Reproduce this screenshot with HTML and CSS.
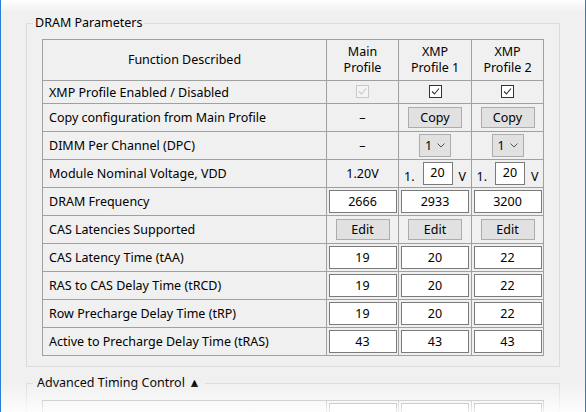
FILE: index.html
```html
<!DOCTYPE html>
<html lang="en">
<head>
<meta charset="utf-8">
<title>DRAM Parameters</title>
<link rel="stylesheet" href="styles.css">
</head>
<body>
<div class="window">
  <fieldset class="group">
    <legend>DRAM Parameters</legend>
    <div class="grid">
      <div class="cell head fn-head">Function Described</div>
      <div class="cell head">Main<br>Profile</div>
      <div class="cell head">XMP<br>Profile 1</div>
      <div class="cell head">XMP<br>Profile 2</div>

      <div class="cell fn">XMP Profile Enabled / Disabled</div>
      <div class="cell check-cell"><span class="cb disabled"><svg width="11" height="11" viewBox="0 0 11 11"><path d="M2 5.5 L4.5 8 L9 2.5" fill="none" stroke="#c8c8c8" stroke-width="1.1"/></svg></span></div>
      <div class="cell check-cell"><span class="cb"><svg width="11" height="11" viewBox="0 0 11 11"><path d="M2 5.5 L4.5 8 L9 2.5" fill="none" stroke="#333" stroke-width="1.1"/></svg></span></div>
      <div class="cell check-cell"><span class="cb"><svg width="11" height="11" viewBox="0 0 11 11"><path d="M2 5.5 L4.5 8 L9 2.5" fill="none" stroke="#333" stroke-width="1.1"/></svg></span></div>

      <div class="cell fn">Copy configuration from Main Profile</div>
      <div class="cell">–</div>
      <div class="cell"><button class="btn">Copy</button></div>
      <div class="cell"><button class="btn">Copy</button></div>

      <div class="cell fn">DIMM Per Channel (DPC)</div>
      <div class="cell">–</div>
      <div class="cell"><span class="select">1<svg width="8" height="5" viewBox="0 0 8 5"><path d="M0.5 0.5 L4 4 L7.5 0.5" fill="none" stroke="#555" stroke-width="1"/></svg></span></div>
      <div class="cell"><span class="select">1<svg width="8" height="5" viewBox="0 0 8 5"><path d="M0.5 0.5 L4 4 L7.5 0.5" fill="none" stroke="#555" stroke-width="1"/></svg></span></div>

      <div class="cell fn">Module Nominal Voltage, VDD</div>
      <div class="cell">1.20V</div>
      <div class="cell volt"><span class="unit pre">1.</span><span class="box small">20</span><span class="unit post">V</span></div>
      <div class="cell volt"><span class="unit pre">1.</span><span class="box small">20</span><span class="unit post">V</span></div>

      <div class="cell fn">DRAM Frequency</div>
      <div class="cell"><span class="box">2666</span></div>
      <div class="cell"><span class="box">2933</span></div>
      <div class="cell"><span class="box">3200</span></div>

      <div class="cell fn">CAS Latencies Supported</div>
      <div class="cell"><button class="btn">Edit</button></div>
      <div class="cell"><button class="btn">Edit</button></div>
      <div class="cell"><button class="btn">Edit</button></div>

      <div class="cell fn">CAS Latency Time (tAA)</div>
      <div class="cell"><span class="box">19</span></div>
      <div class="cell"><span class="box">20</span></div>
      <div class="cell"><span class="box">22</span></div>

      <div class="cell fn">RAS to CAS Delay Time (tRCD)</div>
      <div class="cell"><span class="box">19</span></div>
      <div class="cell"><span class="box">20</span></div>
      <div class="cell"><span class="box">22</span></div>

      <div class="cell fn">Row Precharge Delay Time (tRP)</div>
      <div class="cell"><span class="box">19</span></div>
      <div class="cell"><span class="box">20</span></div>
      <div class="cell"><span class="box">22</span></div>

      <div class="cell fn">Active to Precharge Delay Time (tRAS)</div>
      <div class="cell"><span class="box">43</span></div>
      <div class="cell"><span class="box">43</span></div>
      <div class="cell"><span class="box">43</span></div>
    </div>
  </fieldset>

  <fieldset class="group advanced">
    <legend>Advanced Timing Control ▲</legend>
    <div class="grid">
      <div class="cell fn"></div>
      <div class="cell"><span class="box"></span></div>
      <div class="cell"><span class="box"></span></div>
      <div class="cell"><span class="box"></span></div>
    </div>
  </fieldset>

  <div class="fade-top"></div>
  <div class="fade-bottom"></div>
</div>
</body>
</html>
```

FILE: styles.css
```css
* { box-sizing: border-box; }

html, body {
  margin: 0;
  padding: 0;
}

body {
  width: 586px;
  height: 412px;
  overflow: hidden;
  background: #f0f0f0;
  font-family: "Noto Sans", "Open Sans", sans-serif;
  font-size: 12.5px;
  color: #000;
}

.window {
  position: relative;
  height: 412px;
  border-left: 1px solid #2d7dd2;
  border-right: 1px solid #2d7dd2;
  padding: 15px 0 0 25px;
  overflow: hidden;
}

.group {
  width: 534px;
  margin: 0;
  padding: 8px 15px 10px;
  border: 1px solid #dcdcdc;
}

.group legend {
  margin-left: -9px;
  padding: 0 2px;
  line-height: 16px;
}

.advanced {
  margin-top: 8px;
  padding-top: 9px;
}

.advanced legend {
  padding: 0 4px;
}

.grid {
  display: grid;
  grid-template-columns: 283px 71px 72px 71px;
  grid-template-rows: 40px 22px repeat(9, 27px);
  gap: 1px;
  width: 502px;
  background: #a0a0a0;
  border: 1px solid #a0a0a0;
}

.advanced .grid {
  grid-template-rows: 27px;
}

.cell {
  background: #f0f0f0;
  display: flex;
  align-items: center;
  justify-content: center;
  line-height: 15px;
  white-space: nowrap;
}

.head {
  text-align: center;
  line-height: 16px;
}

.fn {
  justify-content: flex-start;
  padding-left: 6px;
}

.check-cell {
  padding-bottom: 2px;
}

.cb {
  width: 13px;
  height: 13px;
  border: 1px solid #333;
  background: #fff;
  display: flex;
  align-items: center;
  justify-content: center;
}

.cb.disabled {
  border-color: #c8c8c8;
  background: #f4f4f4;
}

.btn {
  width: 54px;
  height: 21px;
  margin: 0;
  padding: 0;
  background: #e1e1e1;
  border: 1px solid #adadad;
  border-radius: 0;
  font: inherit;
  color: #000;
  line-height: 19px;
}

.select {
  width: 32px;
  height: 23px;
  background: #e1e1e1;
  border: 1px solid #adadad;
  display: flex;
  align-items: center;
  gap: 5px;
  padding-left: 5px;
}

.box {
  width: 68px;
  height: 23px;
  background: #fff;
  border: 1px solid #7a7a7a;
  display: flex;
  align-items: center;
  justify-content: center;
}

.box.small {
  width: 30px;
  align-items: flex-start;
  padding-top: 2px;
}

.volt {
  align-items: center;
}

.unit {
  align-self: flex-end;
  margin-bottom: 3px;
}

.pre {
  margin-right: 8px;
}

.post {
  margin-left: 6px;
}

.fade-top {
  position: absolute;
  left: 0;
  right: 0;
  top: 0;
  height: 12px;
  background: linear-gradient(#ffffff 0%, rgba(255, 255, 255, 0.6) 35%, rgba(255, 255, 255, 0) 100%);
  pointer-events: none;
}

.fade-bottom {
  position: absolute;
  left: 0;
  right: 0;
  bottom: 0;
  height: 30px;
  background: linear-gradient(rgba(255, 255, 255, 0) 0%, rgba(255, 255, 255, 0.85) 100%);
  pointer-events: none;
}
```
